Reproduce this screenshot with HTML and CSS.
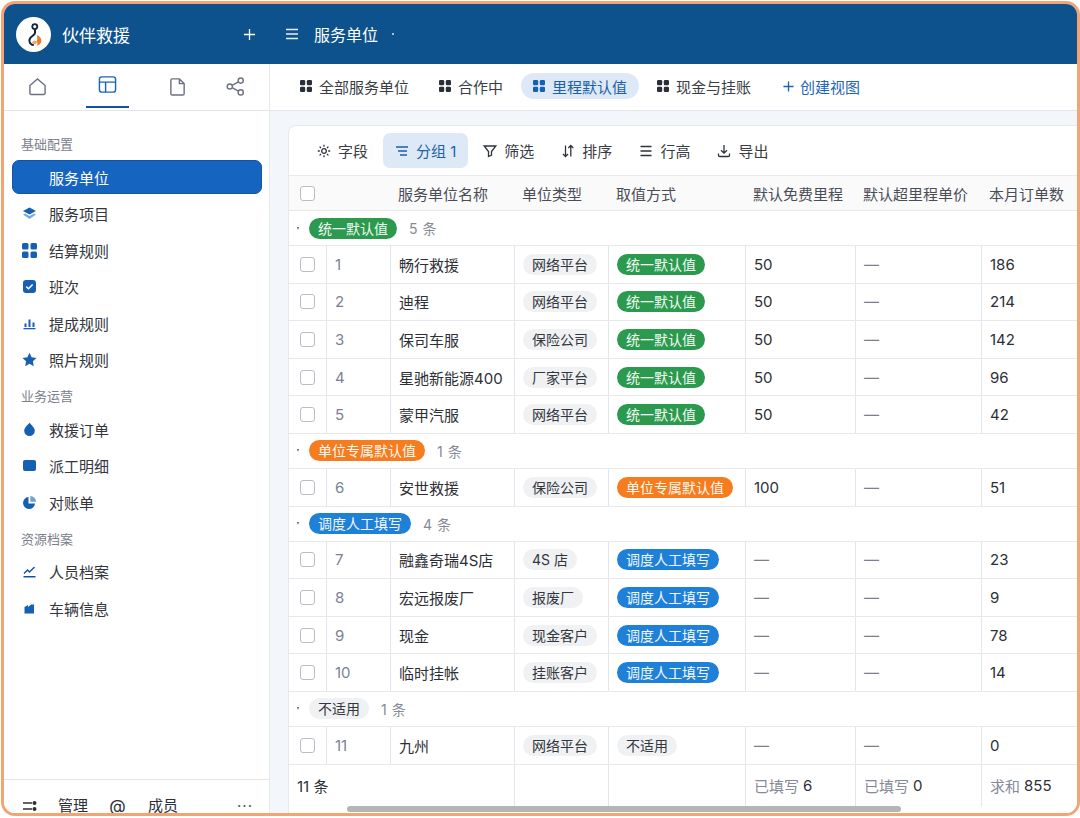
FILE: index.html
```html
<!DOCTYPE html>
<html lang="zh-CN">
<head>
    <meta charset="UTF-8">
    <title>服务单位 - 伙伴救援</title>
    <link rel="stylesheet" href="styles.css">
</head>
<body>
    <svg class="sprite" width="0" height="0">
        <symbol id="i-grid" viewBox="0 0 12 12"><rect x="0" y="0" width="5.2" height="5.2" rx="1.2"/><rect x="6.8" y="0" width="5.2" height="5.2" rx="1.2"/><rect x="0" y="6.8" width="5.2" height="5.2" rx="1.2"/><rect x="6.8" y="6.8" width="5.2" height="5.2" rx="1.2"/></symbol>
    </svg>

    <div class="app">
        <header class="topbar">
            <div class="brand">
                <svg class="logo" viewBox="0 0 35 35">
                    <circle cx="17.5" cy="17.5" r="17.5" fill="#fff"/>
                    <path d="M19 12.5v3.2c0 1.6-1.2 2.3-2.6 3.3-1.8 1.2-3 2.6-3 4.6 0 2.6 2 4.4 4.4 4.4" fill="none" stroke="#14233f" stroke-width="2"/>
                    <circle cx="18.8" cy="9.6" r="2.5" fill="none" stroke="#14233f" stroke-width="1.8"/>
                    <path d="M21 18c2.6 1.4 4.6 3 4.4 6-.2 2.8-2.4 4.4-5 4.6 1.6-1.6 1.4-3.2.2-4.2 1-1.800.8-4.200.4-6.400z" fill="#ee7a24"/>
                    <path d="M15.500 25.500l3-2 3 1.500-2.500 2.500z" fill="#f3a35c"/>
                </svg>
                <span class="brand-name">伙伴救援</span>
                <svg class="brand-add" viewBox="0 0 14 14"><path d="M7 1v12M1 7h12"/></svg>
            </div>
            <div class="crumb">
                <svg class="crumb-menu" viewBox="0 0 14 12"><path d="M1 1.500h12M1 6h12M1 10.500h12"/></svg>
                <span class="crumb-title">服务单位</span>
                <span class="crumb-dot"></span>
            </div>
        </header>

        <div class="body">
            <aside class="sidebar">
                <div class="side-tabs">
                    <svg class="side-tab" viewBox="0 0 20 20"><path d="M2 9l8-7 8 7v8a1.500 1.500 0 0 1-1.500 1.500h-13A1.500 1.500 0 0 1 2 17z"/></svg>
                    <span class="side-tab-on"><svg class="side-tab" viewBox="0 0 20 20"><rect x="1.500" y="2" width="17" height="16" rx="2.500"/><path d="M1.500 7.500h17M8 7.500V18"/></svg></span>
                    <svg class="side-tab" viewBox="0 0 20 20"><path d="M3 3.500A1.500 1.500 0 0 1 4.500 2H12l5 5v10.500a1.500 1.500 0 0 1-1.500 1.500h-11A1.500 1.500 0 0 1 3 17.500zM12 2v5h5"/></svg>
                    <svg class="side-tab" viewBox="0 0 20 20"><circle cx="4" cy="10" r="2.700"/><circle cx="15.500" cy="3.800" r="2.700"/><circle cx="15.500" cy="16.200" r="2.700"/><path d="M6.400 8.700l6.700-3.600M6.400 11.300l6.700 3.600"/></svg>
                </div>

                <div class="nav">
                    <div class="nav-label nav-label-first">基础配置</div>
                    <a class="nav-item nav-item-on"><span class="nav-icon"></span>服务单位</a>
                    <a class="nav-item">
                        <svg class="nav-icon" viewBox="0 0 15 15"><path d="M7.500 1.500l6.500 3.500-6.500 3.500L1 5z"/><path d="M1 8.500l2-1 4.500 2.400L12 7.500l2 1-6.500 4.500z" opacity=".55"/></svg>
                        服务项目
                    </a>
                    <a class="nav-item"><svg class="nav-icon" viewBox="0 0 12 12"><use href="#i-grid"/></svg>结算规则</a>
                    <a class="nav-item">
                        <svg class="nav-icon" viewBox="0 0 15 15"><rect x="1" y="1" width="13" height="13" rx="3"/><path d="M4.300 7.600l2.200 2.100 4.100-4.300" fill="none" stroke="#fff" stroke-width="1.500"/></svg>
                        班次
                    </a>
                    <a class="nav-item">
                        <svg class="nav-icon" viewBox="0 0 15 15"><rect x="2.500" y="7.500" width="2" height="3.500"/><rect x="6.500" y="3.500" width="2" height="7.500"/><rect x="10.500" y="6.500" width="2" height="4.500"/><rect x="1.500" y="12" width="12" height="1.300"/></svg>
                        提成规则
                    </a>
                    <a class="nav-item">
                        <svg class="nav-icon" viewBox="0 0 15 15"><path d="M7.500.8l2.100 4.500 4.900.6-3.600 3.400.9 4.900-4.300-2.400-4.300 2.400.9-4.900L.5 5.900l4.900-.6z"/></svg>
                        照片规则
                    </a>

                    <div class="nav-label">业务运营</div>
                    <a class="nav-item">
                        <svg class="nav-icon" viewBox="0 0 15 15"><path d="M7.500.8c2.400 2.900 5.300 5 5.300 8a5.300 5.300 0 0 1-10.600 0c0-3 2.900-5.100 5.300-8z"/></svg>
                        救援订单
                    </a>
                    <a class="nav-item"><svg class="nav-icon" viewBox="0 0 15 15"><rect x="1" y="2" width="13" height="11" rx="2"/></svg>派工明细</a>
                    <a class="nav-item">
                        <svg class="nav-icon" viewBox="0 0 15 15"><path d="M6.500 2a6 6 0 1 0 6.500 6.500H6.500z"/><path d="M8.300.9a6 6 0 0 1 5.800 5.800H8.300z" opacity=".6"/></svg>
                        对账单
                    </a>

                    <div class="nav-label">资源档案</div>
                    <a class="nav-item">
                        <svg class="nav-icon nav-icon-line" viewBox="0 0 15 15"><path d="M2 9.500l3.500-3.500 2 2 5-5M1.500 12.800h12"/></svg>
                        人员档案
                    </a>
                    <a class="nav-item">
                        <svg class="nav-icon" viewBox="0 0 15 15"><path d="M2.500 6l3.500-2v2l3-2.500h3v9h-9.500z"/></svg>
                        车辆信息
                    </a>
                </div>

                <div class="side-foot">
                    <svg class="foot-icon" viewBox="0 0 14 10"><path d="M0 2h9M0 8h9" stroke="#2c2f36" stroke-width="1.500"/><circle cx="11.500" cy="2" r="2"/><circle cx="11.500" cy="8" r="2"/></svg>
                    <span class="foot-manage">管理</span>
                    <span class="foot-at">@</span>
                    <span class="foot-member">成员</span>
                    <span class="foot-more">···</span>
                </div>
            </aside>

            <main class="main">
                <nav class="views">
                    <a class="view"><svg class="grid-icon" viewBox="0 0 12 12"><use href="#i-grid"/></svg>全部服务单位</a>
                    <a class="view"><svg class="grid-icon" viewBox="0 0 12 12"><use href="#i-grid"/></svg>合作中</a>
                    <a class="view view-on"><svg class="grid-icon" viewBox="0 0 12 12"><use href="#i-grid"/></svg>里程默认值</a>
                    <a class="view"><svg class="grid-icon" viewBox="0 0 12 12"><use href="#i-grid"/></svg>现金与挂账</a>
                    <a class="view view-add"><svg class="add-icon" viewBox="0 0 12 12"><path d="M6 .5v11M.5 6h11"/></svg>创建视图</a>
                </nav>

                <div class="content">
                    <section class="card">
                        <div class="toolbar">
                            <button class="tool">
                                <svg class="tool-icon" viewBox="0 0 14 14"><circle cx="7" cy="7" r="2.300"/><path d="M7 .8v2M7 11.200v2M.8 7h2M11.200 7h2M2.600 2.600L4 4M10 10l1.400 1.400M11.400 2.600L10 4M4 10l-1.400 1.400"/></svg>
                                字段
                            </button>
                            <button class="tool tool-on">
                                <svg class="tool-icon" viewBox="0 0 14 14"><path d="M1 3h12M3 7h9M5 11h7"/></svg>
                                分组 1
                            </button>
                            <button class="tool">
                                <svg class="tool-icon" viewBox="0 0 14 14"><path d="M1.200 2h11.600L8.500 7.500V11L5.500 12.500v-5z"/></svg>
                                筛选
                            </button>
                            <button class="tool">
                                <svg class="tool-icon" viewBox="0 0 14 14"><path d="M4.500 1.500v11M2 10l2.500 2.500L7 10M9.800 12.500v-11M7.300 4l2.500-2.500L12.300 4"/></svg>
                                排序
                            </button>
                            <button class="tool">
                                <svg class="tool-icon" viewBox="0 0 14 14"><path d="M1.500 2.500h11M1.500 7h11M1.500 11.500h11"/></svg>
                                行高
                            </button>
                            <button class="tool">
                                <svg class="tool-icon" viewBox="0 0 14 14"><path d="M7 1v8M4 6.200L7 9.200l3-3M1.500 9.500v1.800a1.200 1.200 0 0 0 1.200 1.200h8.600a1.200 1.200 0 0 0 1.200-1.200V9.500"/></svg>
                                导出
                            </button>
                        </div>

                        <div class="row head">
                            <div class="cell"><span class="check"></span></div>
                            <div class="cell"></div>
                            <div class="cell">服务单位名称</div>
                            <div class="cell">单位类型</div>
                            <div class="cell">取值方式</div>
                            <div class="cell">默认免费里程</div>
                            <div class="cell">默认超里程单价</div>
                            <div class="cell">本月订单数</div>
                        </div>

                        <div class="group"><i class="caret"></i><span class="pill green">统一默认值</span><span class="group-count">5 条</span></div>
                        <div class="row"><div class="cell"><span class="check"></span></div><div class="cell num">1</div><div class="cell">畅行救援</div><div class="cell"><span class="chip">网络平台</span></div><div class="cell"><span class="pill green">统一默认值</span></div><div class="cell">50</div><div class="cell dash">—</div><div class="cell">186</div></div>
                        <div class="row"><div class="cell"><span class="check"></span></div><div class="cell num">2</div><div class="cell">迪程</div><div class="cell"><span class="chip">网络平台</span></div><div class="cell"><span class="pill green">统一默认值</span></div><div class="cell">50</div><div class="cell dash">—</div><div class="cell">214</div></div>
                        <div class="row"><div class="cell"><span class="check"></span></div><div class="cell num">3</div><div class="cell">保司车服</div><div class="cell"><span class="chip">保险公司</span></div><div class="cell"><span class="pill green">统一默认值</span></div><div class="cell">50</div><div class="cell dash">—</div><div class="cell">142</div></div>
                        <div class="row"><div class="cell"><span class="check"></span></div><div class="cell num">4</div><div class="cell">星驰新能源400</div><div class="cell"><span class="chip">厂家平台</span></div><div class="cell"><span class="pill green">统一默认值</span></div><div class="cell">50</div><div class="cell dash">—</div><div class="cell">96</div></div>
                        <div class="row"><div class="cell"><span class="check"></span></div><div class="cell num">5</div><div class="cell">蒙甲汽服</div><div class="cell"><span class="chip">网络平台</span></div><div class="cell"><span class="pill green">统一默认值</span></div><div class="cell">50</div><div class="cell dash">—</div><div class="cell">42</div></div>

                        <div class="group"><i class="caret"></i><span class="pill orange">单位专属默认值</span><span class="group-count">1 条</span></div>
                        <div class="row"><div class="cell"><span class="check"></span></div><div class="cell num">6</div><div class="cell">安世救援</div><div class="cell"><span class="chip">保险公司</span></div><div class="cell"><span class="pill orange">单位专属默认值</span></div><div class="cell">100</div><div class="cell dash">—</div><div class="cell">51</div></div>

                        <div class="group"><i class="caret"></i><span class="pill blue">调度人工填写</span><span class="group-count">4 条</span></div>
                        <div class="row"><div class="cell"><span class="check"></span></div><div class="cell num">7</div><div class="cell">融鑫奇瑞4S店</div><div class="cell"><span class="chip">4S 店</span></div><div class="cell"><span class="pill blue">调度人工填写</span></div><div class="cell dash">—</div><div class="cell dash">—</div><div class="cell">23</div></div>
                        <div class="row"><div class="cell"><span class="check"></span></div><div class="cell num">8</div><div class="cell">宏远报废厂</div><div class="cell"><span class="chip">报废厂</span></div><div class="cell"><span class="pill blue">调度人工填写</span></div><div class="cell dash">—</div><div class="cell dash">—</div><div class="cell">9</div></div>
                        <div class="row"><div class="cell"><span class="check"></span></div><div class="cell num">9</div><div class="cell">现金</div><div class="cell"><span class="chip">现金客户</span></div><div class="cell"><span class="pill blue">调度人工填写</span></div><div class="cell dash">—</div><div class="cell dash">—</div><div class="cell">78</div></div>
                        <div class="row"><div class="cell"><span class="check"></span></div><div class="cell num">10</div><div class="cell">临时挂帐</div><div class="cell"><span class="chip">挂账客户</span></div><div class="cell"><span class="pill blue">调度人工填写</span></div><div class="cell dash">—</div><div class="cell dash">—</div><div class="cell">14</div></div>

                        <div class="group"><i class="caret"></i><span class="chip">不适用</span><span class="group-count">1 条</span></div>
                        <div class="row"><div class="cell"><span class="check"></span></div><div class="cell num">11</div><div class="cell">九州</div><div class="cell"><span class="chip">网络平台</span></div><div class="cell"><span class="chip">不适用</span></div><div class="cell dash">—</div><div class="cell dash">—</div><div class="cell">0</div></div>

                        <div class="row foot">
                            <div class="cell foot-total">11 条</div>
                            <div class="cell"></div>
                            <div class="cell"></div>
                            <div class="cell"><span class="foot-key">已填写</span> 6</div>
                            <div class="cell"><span class="foot-key">已填写</span> 0</div>
                            <div class="cell"><span class="foot-key">求和</span> 855</div>
                        </div>

                        <div class="scrollbar"></div>
                    </section>
                </div>
            </main>
        </div>
    </div>
</body>
</html>
```

FILE: styles.css
```css
* {
    box-sizing: border-box;
}

body {
    margin: 0;
    background-color: #fff;
    font-family: Inter, "Noto Sans CJK SC", sans-serif;
    font-size: 15px;
    color: #2c2f36;
    overflow: hidden;
}

.sprite {
    position: absolute;
}

.app {
    display: flex;
    flex-direction: column;
    width: 1079px;
    height: 815px;
    margin: 1px 0 0 1px;
    border: 3px solid #f2a473;
    border-radius: 14px;
    overflow: hidden;
}

/* top bar */
.topbar {
    display: flex;
    flex: none;
    height: 60px;
    background-color: #0d528c;
    color: #fff;
}

.brand {
    display: flex;
    align-items: center;
    width: 266px;
    padding: 0 14px 0 12px;
}

.logo {
    width: 35px;
    height: 35px;
}

.brand-name {
    margin-left: 11px;
    font-size: 17px;
}

.brand-add {
    width: 13px;
    height: 13px;
    margin-left: auto;
    fill: none;
    stroke: #fff;
    stroke-width: 1.4;
}

.crumb {
    display: flex;
    align-items: center;
    padding-left: 15px;
}

.crumb-menu {
    width: 14px;
    height: 12px;
    fill: none;
    stroke: #e6eef6;
    stroke-width: 1.3;
}

.crumb-title {
    margin-left: 15px;
    font-size: 16px;
}

.crumb-dot {
    width: 2px;
    height: 2px;
    margin-left: 14px;
    border-radius: 50%;
    background-color: #dfe8f2;
}

.body {
    display: flex;
    flex: 1;
    min-height: 0;
}

/* sidebar */
.sidebar {
    display: flex;
    flex: none;
    flex-direction: column;
    width: 266px;
    border-right: 1px solid #e6e8ee;
    background-color: #fff;
}

.side-tabs {
    display: flex;
    flex: none;
    align-items: center;
    justify-content: space-between;
    height: 47px;
    padding: 0 24px 2px 24px;
    border-bottom: 1px solid #e3e5ea;
}

.side-tab {
    width: 19px;
    height: 19px;
    fill: none;
    stroke: #6d7280;
    stroke-width: 1.5;
}

.side-tab-on {
    display: flex;
    justify-content: center;
    align-items: center;
    width: 43px;
    height: 44px;
    padding-bottom: 2px;
    border-bottom: 2px solid #1450a3;
}

.side-tab-on .side-tab {
    stroke: #1565b8;
}

.nav {
    display: flex;
    flex: 1;
    flex-direction: column;
    padding: 24px 7px 0 8px;
}

.nav-label {
    height: 18px;
    margin: 10.400px 0 7px 9px;
    font-size: 13px;
    line-height: 18px;
    color: #7b808c;
}

.nav-label-first {
    margin-top: 0;
}

.nav-item {
    display: flex;
    align-items: center;
    gap: 12px;
    height: 34px;
    padding-left: 10px;
    border-radius: 7px;
    font-size: 15px;
    color: #33363d;
}

.nav-item + .nav-item {
    margin-top: 2.600px;
}

.nav-item-on {
    border: 1px solid #0f56a4;
    background-color: #1565c0;
    color: #fff;
    padding-left: 9px;
}

.nav-icon {
    flex: none;
    width: 15px;
    height: 15px;
    fill: #1560b4;
}

.nav-icon-line {
    fill: none;
    stroke: #1450a3;
    stroke-width: 1.400;
}

.side-foot {
    display: flex;
    flex: none;
    align-items: flex-start;
    height: 34px;
    padding: 17px 0 0 19px;
    border-top: 1px solid #e3e5ea;
    line-height: 18px;
}

.foot-icon {
    width: 14px;
    height: 10px;
    margin-top: 4px;
    fill: #2c2f36;
}

.foot-manage {
    margin-left: 21px;
}

.foot-at {
    width: 17px;
    margin-left: 21px;
    font-size: 17px;
    text-align: center;
}

.foot-member {
    margin-left: 22px;
}

.foot-more {
    margin-left: 59px;
    letter-spacing: 1px;
    color: #55585f;
}

/* main column */
.main {
    display: flex;
    flex: 1;
    flex-direction: column;
    min-width: 0;
}

.views {
    display: flex;
    flex: none;
    align-items: center;
    gap: 6px;
    height: 47px;
    padding: 0 0 2px 18px;
    border-bottom: 1px solid #e3e5ea;
    background-color: #fff;
}

.view {
    display: flex;
    align-items: center;
    gap: 7px;
    height: 26px;
    padding: 0 12px;
    border-radius: 13px;
    color: #3a3d45;
}

.view-on {
    background-color: #dde9f6;
    color: #1d5fa8;
}

.view-add {
    gap: 6px;
    padding-left: 14px;
    color: #1d66b5;
}

.grid-icon {
    flex: none;
    width: 12px;
    height: 12px;
    fill: #2a2f3a;
}

.view-on .grid-icon {
    fill: #1560b4;
}

.add-icon {
    width: 11px;
    height: 11px;
    fill: none;
    stroke: #1d66b5;
    stroke-width: 1.500;
}

.content {
    flex: 1;
    min-height: 0;
    padding: 14px 0 0 18px;
    background-color: #f3f6fb;
}

.card {
    position: relative;
    height: 100%;
    border: 1px solid #e6e9ef;
    border-width: 1px 0 0 1px;
    border-top-left-radius: 8px;
    background-color: #fff;
    overflow: hidden;
}

.toolbar {
    display: flex;
    align-items: center;
    gap: 3px;
    height: 50px;
    padding-left: 16px;
    border-bottom: 1px solid #e8eaef;
}

.tool {
    display: flex;
    align-items: center;
    gap: 7px;
    height: 35px;
    padding: 0 12px;
    border: none;
    border-radius: 7px;
    background: none;
    font: inherit;
    color: #3a3d45;
}

.tool-on {
    background-color: #dde9f6;
    color: #1d5fa8;
}

.tool-icon {
    flex: none;
    width: 14px;
    height: 14px;
    fill: none;
    stroke: #2f333b;
    stroke-width: 1.300;
}

.tool-on .tool-icon {
    stroke: #1d5fa8;
}

/* table */
.row {
    display: grid;
    grid-template-columns: 37px 64px 124px 94px 137px 110px 126px 100px;
    height: 37.600px;
    border-bottom: 1px solid #e6e8ec;
}

.cell {
    display: flex;
    align-items: center;
    padding-left: 8px;
    border-left: 1px solid #e3e5ea;
    white-space: nowrap;
    overflow: hidden;
}

.cell:first-child {
    padding-left: 11px;
    border-left: none;
}

.num {
    color: #7b8296;
}

.dash {
    color: #7b808c;
}

.head {
    height: 35px;
    background-color: #fafafb;
    color: #4a4d55;
}

.head .cell {
    border-left: none;
}

.check {
    flex: none;
    width: 15px;
    height: 15px;
    border: 1.500px solid #b9bdc6;
    border-radius: 3px;
    background-color: #fff;
}

.group {
    display: flex;
    align-items: center;
    height: 35px;
    padding-left: 8px;
    border-bottom: 1px solid #e6e8ec;
}

.caret {
    width: 0;
    height: 0;
    margin-right: 10px;
    border-top: 3px solid #5a5f6a;
    border-left: 1.500px solid transparent;
    border-right: 1.500px solid transparent;
}

.group-count {
    margin-left: 12px;
    font-size: 14px;
    letter-spacing: .5px;
    color: #858a96;
}

.pill,
.chip {
    display: inline-block;
    height: 21px;
    padding: 0 9px;
    border-radius: 11px;
    font-size: 14px;
    line-height: 21px;
    white-space: nowrap;
}

.green {
    background-color: #2b9a4e;
    color: #f2faf4;
}

.orange {
    background-color: #f57c1f;
    color: #fff6ee;
}

.blue {
    background-color: #1f80d8;
    color: #f2f8fe;
}

.chip {
    background-color: #f0f1f3;
    color: #33363d;
}

.foot {
    grid-template-columns: 225px 94px 137px 110px 126px 100px;
    height: 42px;
    border-bottom: none;
}

.cell.foot-total {
    padding-left: 8px;
}

.foot-key {
    margin-right: 4px;
    color: #858a96;
}

.scrollbar {
    position: absolute;
    left: 58px;
    bottom: 1px;
    width: 554px;
    height: 6px;
    border-radius: 3px;
    background-color: #b5b5b8;
}
```
